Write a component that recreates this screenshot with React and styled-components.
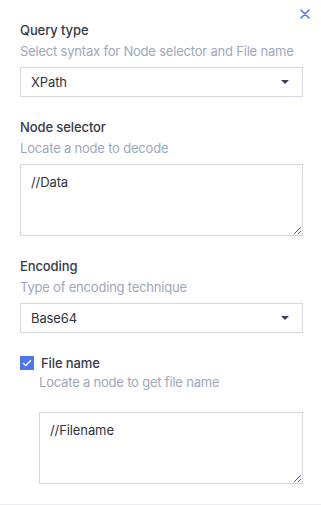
import React from 'react'
import styled, { createGlobalStyle } from 'styled-components'

const GlobalStyle = createGlobalStyle`
  body {
    margin: 0;
    background: #ffffff;
    font-family: 'Inter', 'Noto Sans', sans-serif;
  }
`

const App = () => {
    return (
        <>
            <GlobalStyle />
            <Panel>
                <CloseRow>
                    <CloseButton aria-label='close'>
                        <svg width='10' height='10' viewBox='0 0 10 10'>
                            <path d='M1 1L9 9M9 1L1 9' stroke='#4b7bf5' strokeWidth='1.6' strokeLinecap='round' />
                        </svg>
                    </CloseButton>
                </CloseRow>

                <Field>
                    <Label>Query type</Label>
                    <Hint>Select syntax for Node selector and File name</Hint>
                    <Select>
                        <span>XPath</span>
                        <Caret />
                    </Select>
                </Field>

                <Field>
                    <Label>Node selector</Label>
                    <Hint>Locate a node to decode</Hint>
                    <TextArea defaultValue='//Data' />
                </Field>

                <Field>
                    <Label>Encoding</Label>
                    <Hint>Type of encoding technique</Hint>
                    <Select>
                        <span>Base64</span>
                        <Caret />
                    </Select>
                </Field>

                <Field>
                    <CheckRow>
                        <Checkbox>
                            <svg width='10' height='8' viewBox='0 0 10 8'>
                                <path d='M1 4L3.8 6.6L9 1.2' stroke='#ffffff' strokeWidth='1.4' fill='none' />
                            </svg>
                        </Checkbox>
                        <Label>File name</Label>
                    </CheckRow>
                    <Indented>
                        <Hint $top={-1}>Locate a node to get file name</Hint>
                        <TextArea defaultValue='//Filename' $top={20} />
                    </Indented>
                </Field>
            </Panel>
            <Footer />
        </>
    )
}

export default App

const Panel = styled.div`
    width: 321px;
    box-sizing: border-box;
    padding: 0 18px 0 20px;
    display: flex;
    flex-direction: column;
`

const CloseRow = styled.div`
    display: flex;
    justify-content: flex-end;
    height: 20px;
    padding-top: 9px;
    box-sizing: border-box;
    margin-right: -7px;
`

const CloseButton = styled.button`
    border: none;
    background: none;
    padding: 0;
    width: 10px;
    height: 10px;
    display: flex;
    cursor: pointer;
`

const Field = styled.div`
    display: flex;
    flex-direction: column;
    margin-bottom: 20px;
`

const Label = styled.div`
    font-size: 13px;
    line-height: 20px;
    font-weight: 500;
    letter-spacing: -0.1px;
    color: #353a45;
`

const Hint = styled.div`
    font-size: 13px;
    line-height: 20px;
    margin-top: ${p => (p.$top !== undefined ? p.$top : 1)}px;
    letter-spacing: -0.2px;
    color: #9ea8bb;
    white-space: nowrap;
`

const Select = styled.div`
    margin-top: 6px;
    height: 30px;
    box-sizing: border-box;
    border: 1px solid #d5d8e1;
    display: flex;
    align-items: center;
    justify-content: space-between;
    padding: 0 10px 0 10px;
    font-size: 13px;
    letter-spacing: -0.1px;
    color: #30343d;
`

const Caret = styled.span`
    width: 0;
    height: 0;
    border-left: 4px solid transparent;
    border-right: 4px solid transparent;
    border-top: 4px solid #3b4150;
    margin-right: 3px;
`

const TextArea = styled.textarea`
    margin-top: ${p => (p.$top ? p.$top : 6)}px;
    height: 72px;
    box-sizing: border-box;
    border: 1px solid #d5d8e1;
    border-radius: 0;
    padding: 9px 10px;
    font-family: 'Inter', 'Noto Sans', sans-serif;
    font-size: 13px;
    letter-spacing: -0.1px;
    color: #30343d;
    outline: none;
    resize: vertical;
`

const CheckRow = styled.div`
    display: flex;
    align-items: center;
    gap: 7px;
`

const Checkbox = styled.span`
    width: 14px;
    height: 14px;
    background: #4a76f0;
    display: flex;
    align-items: center;
    justify-content: center;
`

const Indented = styled.div`
    display: flex;
    flex-direction: column;
    padding-left: 19px;
`

const Footer = styled.div`
    border-top: 1px solid #ebedf2;
    height: 0;
`
